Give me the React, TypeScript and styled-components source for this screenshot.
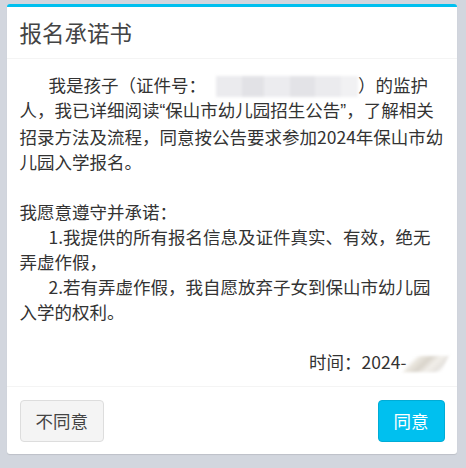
import { FC } from 'react';

import styled, { createGlobalStyle } from 'styled-components';

const GlobalStyle = createGlobalStyle`
  html, body {
    margin: 0;
    padding: 0;
    background: #d2d6de;
  }
  body {
    font-family: "Noto Sans CJK SC", "Noto Sans", sans-serif;
    color: #333;
  }
`;

const Page = styled.div`
  width: 466px;
  height: 468px;
  padding: 4px 9px 0 7px;
  box-sizing: border-box;
`;

const Box = styled.div`
  background: #fff;
  border-top: 3px solid #00c0ef;
  border-radius: 3px;
  box-shadow: 0 1px 1px rgba(0, 0, 0, 0.1);
`;

const BoxHeader = styled.div`
  padding: 12px 12.5px 13px;
  border-bottom: 1px solid #f4f4f4;
`;

const Title = styled.h3`
  margin: 0;
  font-size: 22.5px;
  line-height: 26px;
  font-weight: 400;
  color: #444;
`;

const BoxBody = styled.div`
  padding: 12.5px;
  font-size: 17.5px;
  line-height: 25px;
  white-space: nowrap;
`;

const Para = styled.p<{ $indent?: boolean }>`
  margin: 0;
  text-indent: ${(p) => (p.$indent ? '29px' : '0')};
`;

const Gap = styled.div`
  height: 25px;
`;

const Quote = styled.span`
  font-family: "Liberation Sans", sans-serif;
`;

const Masked = styled.span`
  display: inline-block;
  vertical-align: -5px;
  width: 142px;
  height: 21px;
  margin-left: 10px;
  background: linear-gradient(
    90deg,
    #ebebee 0 18%,
    #e2e2e6 18% 34%,
    #ececef 34% 52%,
    #e3e3e7 52% 70%,
    #ebebee 70% 88%,
    #f1f1f3 88% 100%
  );
  filter: blur(1.5px);
`;

const DateLine = styled.div`
  text-align: right;
`;

const Smudge = styled.span`
  display: inline-block;
  vertical-align: -3px;
  width: 38px;
  height: 16px;
  background: linear-gradient(120deg, #fff 0 10%, #e8e4dc 25%, #d9d4cb 45%, #f1eee9 65%, #e6e3df 85%, #fff 100%);
  filter: blur(1.5px);
  transform: skewX(-25deg);
`;

const BoxFooter = styled.div`
  display: flex;
  justify-content: space-between;
  padding: 12.5px;
  border-top: 1px solid #f4f4f4;
`;

const Button = styled.button<{ $primary?: boolean }>`
  font-family: "Noto Sans CJK SC", sans-serif;
  font-size: 17.5px;
  line-height: 25px;
  padding: 7.5px 15px;
  border-radius: 4px;
  border: 1px solid ${(p) => (p.$primary ? '#00acd6' : '#ddd')};
  background: ${(p) => (p.$primary ? '#00c0ef' : '#f4f4f4')};
  color: ${(p) => (p.$primary ? '#fff' : '#444')};
  cursor: pointer;
`;

const App: FC = () => {
  return (
    <Page>
      <GlobalStyle />
      <Box>
        <BoxHeader>
          <Title>报名承诺书</Title>
        </BoxHeader>
        <BoxBody>
          <Para $indent>
            我是孩子（证件号：
            <Masked />
            ）的监护
            <br />
            人，我已详细阅读<Quote>“</Quote>保山市幼儿园招生公告<Quote>”</Quote>，了解相关
            <br />
            招录方法及流程，同意按公告要求参加2024年保山市幼
            <br />
            儿园入学报名。
          </Para>
          <Gap />
          <Para>我愿意遵守并承诺：</Para>
          <Para $indent>
            1.我提供的所有报名信息及证件真实、有效，绝无
            <br />
            弄虚作假，
          </Para>
          <Para $indent>
            2.若有弄虚作假，我自愿放弃子女到保山市幼儿园
            <br />
            入学的权利。
          </Para>
          <Gap />
          <DateLine>
            时间：2024-
            <Smudge />
          </DateLine>
        </BoxBody>
        <BoxFooter>
          <Button>不同意</Button>
          <Button $primary>同意</Button>
        </BoxFooter>
      </Box>
    </Page>
  );
};

export default App;
